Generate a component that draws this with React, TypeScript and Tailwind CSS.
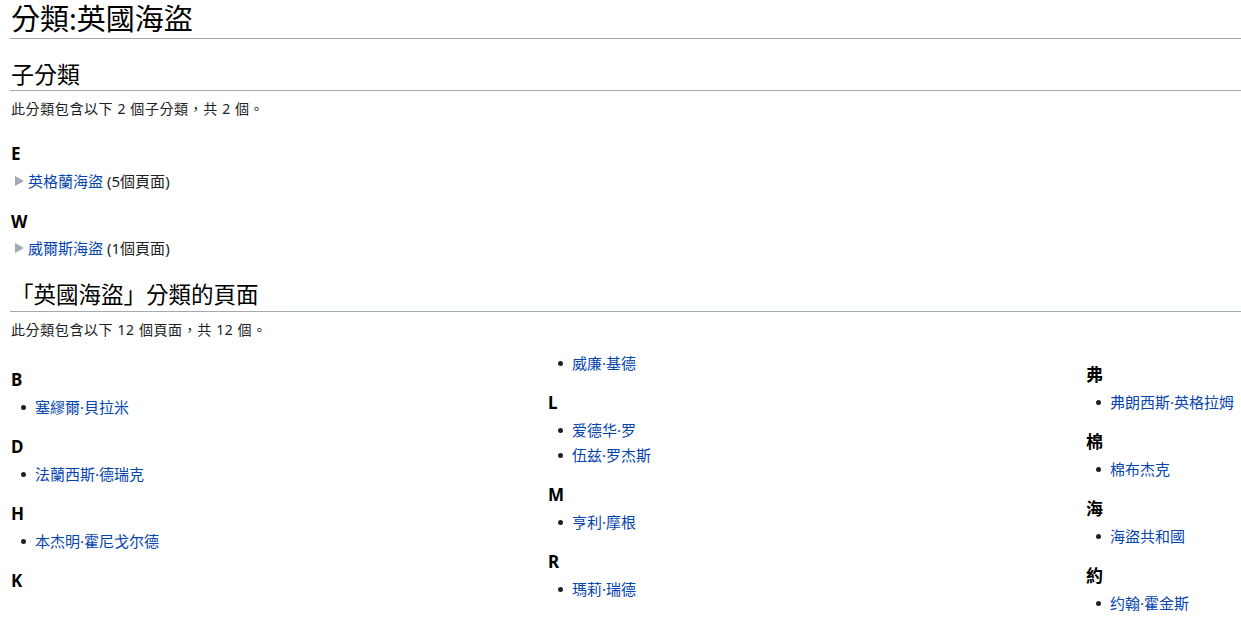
import React from "react";

const FONT = { fontFamily: '"Noto Sans", "Noto Sans CJK TC", sans-serif' };

type Group = { letter: string; items: string[] };

function Bullet() {
  return <span className="inline-block w-[5px] h-[5px] rounded-full bg-[#202122] mr-[9px] ml-[10px] shrink-0" />;
}

function PageGroup({ g, first }: { g: Group; first?: boolean }) {
  return (
    <div className={first ? "" : "mt-[18px]"}>
      {g.letter && <h3 className="text-[17px] font-bold leading-[22px] text-black">{g.letter}</h3>}
      <ul className={`flex flex-col gap-[3px] ${g.letter ? "mt-[5px]" : ""}`}>
        {g.items.map((it) => (
          <li key={it} className="flex items-center text-[15px] leading-[22px]">
            <Bullet />
            <a className="text-[#0645ad]">{it}</a>
          </li>
        ))}
      </ul>
    </div>
  );
}

function Column({ groups, className }: { groups: Group[]; className: string }) {
  return (
    <div className={className}>
      {groups.map((g, i) => (
        <PageGroup key={g.letter + i} g={g} first={i === 0} />
      ))}
    </div>
  );
}

function TreeRow({ name, count }: { name: string; count: string }) {
  return (
    <div className="flex items-center text-[15px] leading-[22px] text-[#202122]">
      <svg width="9" height="10" viewBox="0 0 9 10" className="ml-[4px] mr-[4px]">
        <path d="M0 0 L9 5 L0 10 Z" fill="#a2a9b1" />
      </svg>
      <a className="text-[#0645ad]">{name}</a>
      <span className="ml-[4px]">({count})</span>
    </div>
  );
}

export default function App() {
  const col1: Group[] = [
    { letter: "B", items: ["塞繆爾·貝拉米"] },
    { letter: "D", items: ["法蘭西斯·德瑞克"] },
    { letter: "H", items: ["本杰明·霍尼戈尔德"] },
    { letter: "K", items: [] },
  ];
  const col2: Group[] = [
    { letter: "", items: ["威廉·基德"] },
    { letter: "L", items: ["爱德华·罗", "伍兹·罗杰斯"] },
    { letter: "M", items: ["亨利·摩根"] },
    { letter: "R", items: ["瑪莉·瑞德"] },
  ];
  const col3: Group[] = [
    { letter: "弗", items: ["弗朗西斯·英格拉姆"] },
    { letter: "棉", items: ["棉布杰克"] },
    { letter: "海", items: ["海盜共和國"] },
    { letter: "約", items: ["约翰·霍金斯"] },
  ];

  return (
    <div className="w-[1241px] h-[627px] overflow-hidden bg-white text-[#202122] pl-[10px]" style={FONT}>
      <h1 className="text-[29px] leading-[38px] font-normal border-b border-[#a2a9b1] pl-[1px] text-black">
        分類:英國海盜
      </h1>

      <h2 className="mt-[19px] text-[23px] leading-[32px] font-normal border-b border-[#a2a9b1] pl-[1px] text-black">
        子分類
      </h2>
      <p className="mt-[7px] pl-[1px] text-[14px] tracking-[0.6px] leading-[22px]">此分類包含以下 2 個子分類，共 2 個。</p>

      <div className="pl-[1px]">
        <h3 className="mt-[23px] text-[17px] font-bold leading-[22px] text-black">E</h3>
        <div className="mt-[5px]">
          <TreeRow name="英格蘭海盜" count="5個頁面" />
        </div>
        <h3 className="mt-[19px] text-[17px] font-bold leading-[22px] text-black">W</h3>
        <div className="mt-[4px]">
          <TreeRow name="威爾斯海盜" count="1個頁面" />
        </div>
      </div>

      <h2 className="mt-[20px] text-[22.5px] leading-[32px] font-normal border-b border-[#a2a9b1] pl-[1px] text-black">
        「英國海盜」分類的頁面
      </h2>
      <p className="mt-[7px] pl-[1px] text-[14px] tracking-[0.6px] leading-[22px]">此分類包含以下 12 個頁面，共 12 個。</p>

      <div className="mt-[11px] pl-[1px] grid grid-cols-[537px_538px_1fr]">
        <Column groups={col1} className="pt-[17px]" />
        <Column groups={col2} className="" />
        <Column groups={col3} className="pt-[12px]" />
      </div>
    </div>
  );
}
